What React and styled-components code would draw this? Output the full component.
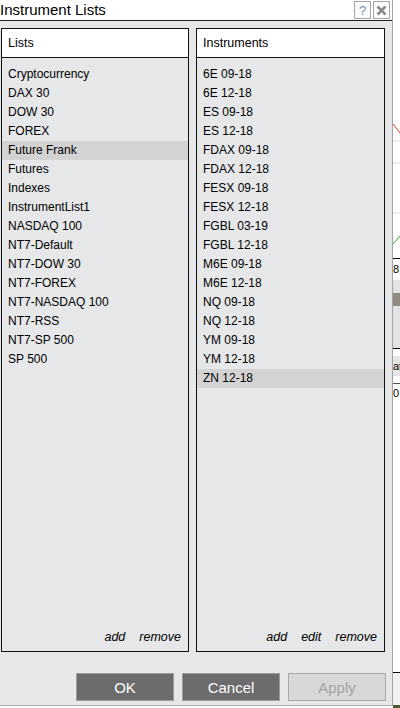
import React from 'react';
import styled, { createGlobalStyle } from 'styled-components';

const GlobalStyle = createGlobalStyle`
  html, body {
    margin: 0;
    padding: 0;
    background: #c9c9c9;
    font-family: "Liberation Sans", Arial, sans-serif;
  }
`;

const lists = [
  'Cryptocurrency', 'DAX 30', 'DOW 30', 'FOREX', 'Future Frank', 'Futures',
  'Indexes', 'InstrumentList1', 'NASDAQ 100', 'NT7-Default', 'NT7-DOW 30',
  'NT7-FOREX', 'NT7-NASDAQ 100', 'NT7-RSS', 'NT7-SP 500', 'SP 500',
];

const instruments = [
  '6E 09-18', '6E 12-18', 'ES 09-18', 'ES 12-18', 'FDAX 09-18', 'FDAX 12-18',
  'FESX 09-18', 'FESX 12-18', 'FGBL 03-19', 'FGBL 12-18', 'M6E 09-18',
  'M6E 12-18', 'NQ 09-18', 'NQ 12-18', 'YM 09-18', 'YM 12-18', 'ZN 12-18',
];

const Screen = styled.div`
  display: flex;
  width: 400px;
  height: 708px;
  overflow: hidden;
  background: #fff;
`;

const Dialog = styled.div`
  display: flex;
  flex-direction: column;
  width: 392px;
  height: 705px;
  flex-shrink: 0;
  background: #e6e7e8;
  border-right: 1px solid #a4a4a4;
  border-bottom: 1px solid #a8a8a8;
`;

const TitleBar = styled.div`
  display: flex;
  align-items: center;
  justify-content: space-between;
  height: 20px;
  background: #fff;
  border-bottom: 1px solid #1e1e1e;
  padding-right: 2px;
`;

const Title = styled.div`
  font-size: 15px;
  color: #000;
  line-height: 20px;
`;

const TitleButtons = styled.div`
  display: flex;
  gap: 2px;
`;

const TitleButton = styled.div`
  width: 15px;
  height: 16px;
  border: 1px solid #a6a6a6;
  background: #fbfbfb;
  display: flex;
  align-items: center;
  justify-content: center;
  font-size: 13px;
  color: #7a8ea8;
`;

const Body = styled.div`
  display: flex;
  flex-direction: column;
  padding: 7px 0 0 1px;
`;

const Panels = styled.div`
  display: grid;
  grid-template-columns: 188px 189px;
  gap: 7px;
  height: 624px;
`;

const Panel = styled.div`
  display: flex;
  flex-direction: column;
  border: 1px solid #111;
  min-height: 0;
`;

const PanelHeader = styled.div`
  height: 28px;
  line-height: 28px;
  background: #fff;
  border-bottom: 1px solid #111;
  padding-left: 6px;
  font-size: 12.5px;
  color: #000;
`;

const List = styled.div`
  flex: 1;
  display: flex;
  flex-direction: column;
  padding-top: 7px;
`;

const Row = styled.div`
  height: 19px;
  line-height: 19px;
  padding-left: 6px;
  font-size: 12px;
  color: #000;
  background: ${(p) => (p.selected ? '#d3d3d3' : 'transparent')};
  white-space: nowrap;
`;

const Links = styled.div`
  display: flex;
  justify-content: flex-end;
  gap: 14px;
  height: 19px;
  line-height: 19px;
  padding: 0 7px 4px 0;
`;

const Link = styled.span`
  font-size: 12.5px;
  font-style: italic;
  color: #000;
`;

const ButtonRow = styled.div`
  display: flex;
  justify-content: flex-end;
  gap: 8px;
  margin-top: 21px;
  padding-right: 6px;
`;

const Button = styled.div`
  width: 96px;
  height: 26px;
  display: flex;
  align-items: center;
  justify-content: center;
  font-size: 15px;
  background: ${(p) => (p.disabled ? '#d8d8d8' : '#6c6c6c')};
  border: 1px solid ${(p) => (p.disabled ? '#a9a9a9' : '#9c9c9c')};
  color: ${(p) => (p.disabled ? '#a3a3a3' : '#fff')};
`;

const Backdrop = styled.div`
  flex: 1;
  display: flex;
  flex-direction: column;
  background: #fff;
`;

const Segment = styled.div`
  height: ${(p) => p.h}px;
  flex-shrink: 0;
  background: ${(p) => p.bg || '#fff'};
  border-top: ${(p) => (p.line ? `1px solid ${p.line}` : 'none')};
  font-size: 11px;
  line-height: ${(p) => p.h}px;
  color: #000;
  overflow: hidden;
  white-space: nowrap;
`;

const Chip = styled.div`
  margin-top: 13px;
  height: 13px;
  background: #8f8b80;
`;

const ChartFragment = () => (
  <svg width="7" height="260" style={{ display: 'block' }}>
    <line x1="0" y1="141" x2="7" y2="141" stroke="#d8d8d8" />
    <line x1="0" y1="163" x2="7" y2="163" stroke="#d8d8d8" />
    <line x1="0" y1="213" x2="7" y2="213" stroke="#d8d8d8" />
    <line x1="0" y1="124" x2="7" y2="133" stroke="#e8382f" />
    <line x1="0" y1="244" x2="7" y2="236" stroke="#3a9a3a" />
  </svg>
);

const ListPanel = ({ title, items, selected, actions }) => (
  <Panel>
    <PanelHeader>{title}</PanelHeader>
    <List>
      {items.map((item) => (
        <Row key={item} selected={item === selected}>{item}</Row>
      ))}
    </List>
    <Links>
      {actions.map((a) => (
        <Link key={a}>{a}</Link>
      ))}
    </Links>
  </Panel>
);

export default function App() {
  return (
    <>
      <GlobalStyle />
      <Screen>
        <Dialog>
          <TitleBar>
            <Title>Instrument Lists</Title>
            <TitleButtons>
              <TitleButton>?</TitleButton>
              <TitleButton>
                <svg width="11" height="11" viewBox="0 0 11 11">
                  <path d="M1.5 1.5 L9.5 9.5 M9.5 1.5 L1.5 9.5" stroke="#8a8a8a" strokeWidth="2.6" />
                </svg>
              </TitleButton>
            </TitleButtons>
          </TitleBar>
          <Body>
            <Panels>
              <ListPanel
                title="Lists"
                items={lists}
                selected="Future Frank"
                actions={['add', 'remove']}
              />
              <ListPanel
                title="Instruments"
                items={instruments}
                selected="ZN 12-18"
                actions={['add', 'edit', 'remove']}
              />
            </Panels>
            <ButtonRow>
              <Button>OK</Button>
              <Button>Cancel</Button>
              <Button disabled>Apply</Button>
            </ButtonRow>
          </Body>
        </Dialog>
        <Backdrop>
          <ChartFragment />
          <Segment h={21} line="#000">8:</Segment>
          <Segment h={68} bg="#e3e3e3"><Chip /></Segment>
          <Segment h={7} line="#000" />
          <Segment h={20} bg="#e6e6e6">at</Segment>
          <Segment h={7} />
          <Segment h={18} line="#555">0</Segment>
          <Segment h={270} />
          <Segment h={32} line="#000" bg="#f2f2f2" />
          <Segment h={3} bg="#4e5a2e" />
        </Backdrop>
      </Screen>
    </>
  );
}
